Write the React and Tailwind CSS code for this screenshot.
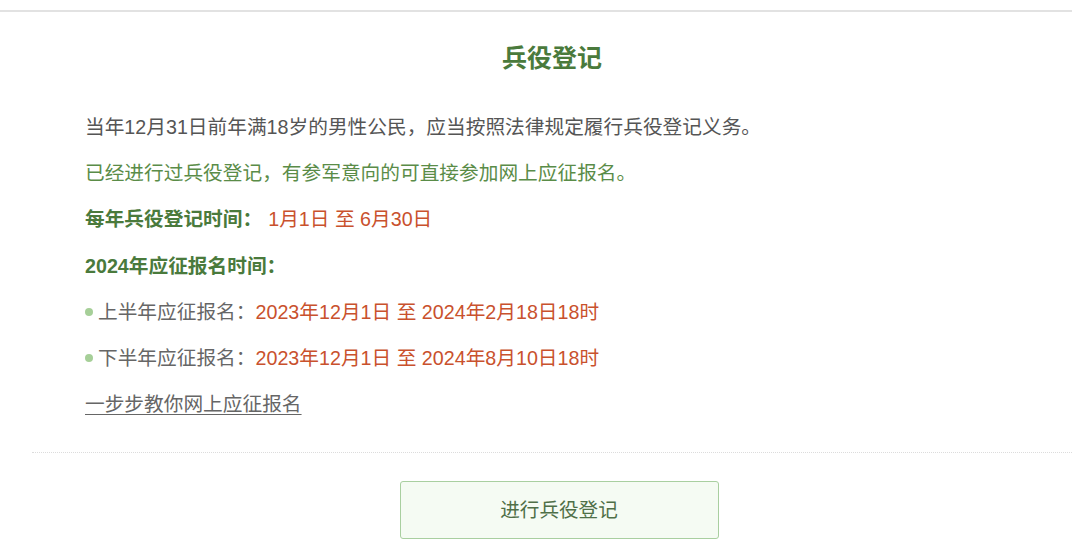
export default function App() {
  const font = { fontFamily: '"Liberation Sans", "Noto Sans CJK SC", sans-serif' };
  const periods = [
    { label: '上半年应征报名：', value: '2023年12月1日 至 2024年2月18日18时' },
    { label: '下半年应征报名：', value: '2023年12月1日 至 2024年8月10日18时' },
  ];

  return (
    <div className="w-[1080px] h-[548px] bg-white overflow-hidden" style={font}>
      <div className="pt-[10px]">
        <div className="w-[1072px] border-t-2 border-[#e2e2e2]" />
      </div>

      <div className="ml-[32px] w-[1040px]">
        <h1 className="pt-[28px] text-center text-[25px] leading-[36px] font-bold text-[#4a7a3c]">兵役登记</h1>

        <div className="mt-[28px] pl-[53px] text-[19.7px] leading-[46.2px]">
          <p className="text-[#555555]">当年12月31日前年满18岁的男性公民，应当按照法律规定履行兵役登记义务。</p>
          <p className="text-[#5a8c48]">已经进行过兵役登记，有参军意向的可直接参加网上应征报名。</p>
          <p>
            <span className="font-bold text-[#4a7a3c]">每年兵役登记时间：</span>
            <span className="ml-[6px] text-[#c9512d]">1月1日 至 6月30日</span>
          </p>
          <p className="font-bold text-[#4a7a3c]">2024年应征报名时间：</p>
          {periods.map((p) => (
            <p key={p.label} className="flex items-center">
              <span className="w-[8px] h-[8px] rounded-full bg-[#a6cf98] mr-[5px]" />
              <span className="text-[#666666]">{p.label}</span>
              <span className="text-[#c9512d]">{p.value}</span>
            </p>
          ))}
          <p>
            <a className="text-[#666666] underline underline-offset-[3px]">一步步教你网上应征报名</a>
          </p>
        </div>

        <div className="mt-[25px] border-t border-dotted border-[#dcdcdc]" />

        <div className="mt-[28px] flex justify-center pl-[14px]">
          <button className="w-[319px] h-[58px] rounded-[3px] border border-[#a9cfa0] bg-[#f5fbf3] text-[19.6px] text-[#4f6f47]">
            进行兵役登记
          </button>
        </div>
      </div>
    </div>
  );
}
